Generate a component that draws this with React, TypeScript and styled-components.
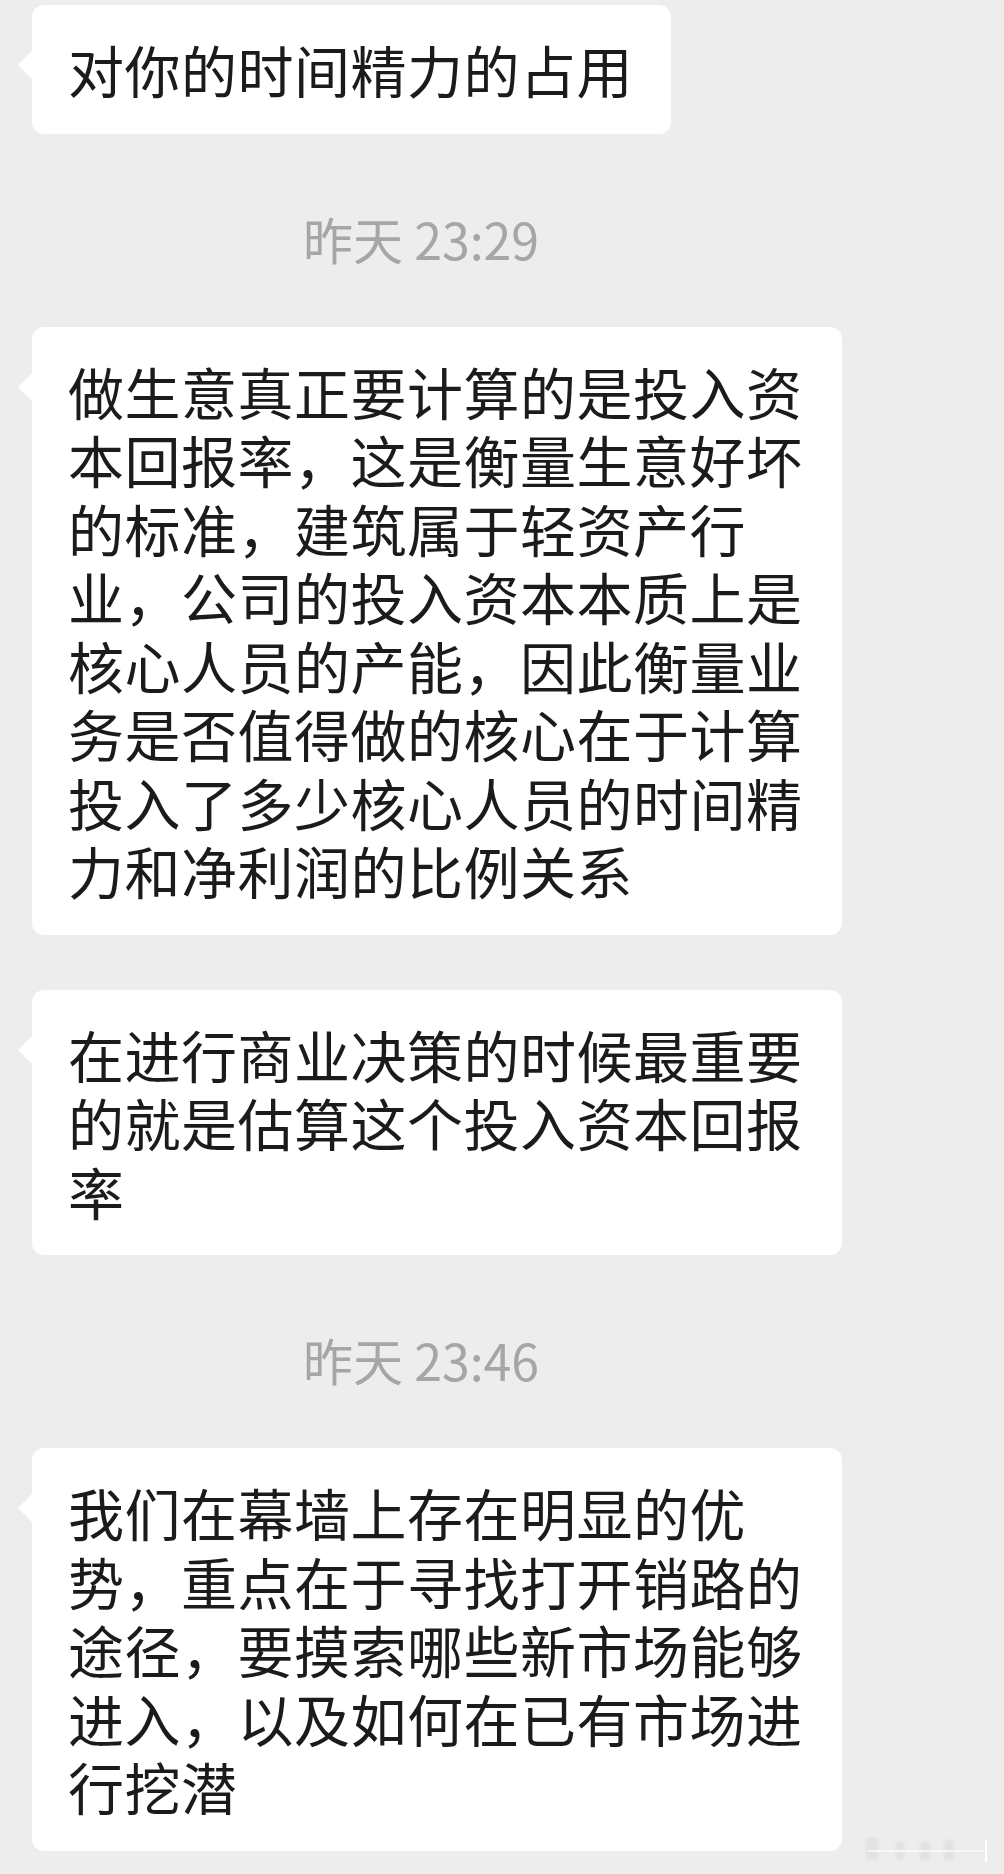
import React from 'react';
import styled, { createGlobalStyle } from 'styled-components';

type Item = { kind: 'time'; text: string } | { kind: 'msg'; text: string };

const items: Item[] = [
	{ kind: 'msg', text: '对你的时间精力的占用' },
	{ kind: 'time', text: '昨天 23:29' },
	{
		kind: 'msg',
		text: '做生意真正要计算的是投入资本回报率，这是衡量生意好坏的标准，建筑属于轻资产行业，公司的投入资本本质上是核心人员的产能，因此衡量业务是否值得做的核心在于计算投入了多少核心人员的时间精力和净利润的比例关系',
	},
	{ kind: 'msg', text: '在进行商业决策的时候最重要的就是估算这个投入资本回报率' },
	{ kind: 'time', text: '昨天 23:46' },
	{
		kind: 'msg',
		text: '我们在幕墙上存在明显的优势，重点在于寻找打开销路的途径，要摸索哪些新市场能够进入，以及如何在已有市场进行挖潜',
	},
];

const GlobalStyle = createGlobalStyle`
	html, body {
		margin: 0;
		padding: 0;
		background: #ededed;
	}
`;

const Page = styled.div`
	position: relative;
	min-height: 1874px;
	width: 1004px;
	box-sizing: border-box;
	padding: 5px 0 0 0;
	background: #ededed;
	font-family: 'Noto Sans CJK SC', 'Noto Sans', sans-serif;
`;

const Thread = styled.div`
	width: 842px;
	box-sizing: border-box;
	padding-left: 32px;
	display: flex;
	flex-direction: column;
	align-items: flex-start;
`;

const Bubble = styled.div<{ $first?: boolean }>`
	position: relative;
	max-width: 810px;
	box-sizing: border-box;
	padding: 30px 38px 30px 36px;
	margin-top: ${(p) => (p.$first ? '0' : '55px')};
	background: #ffffff;
	border-radius: 12px;
	color: #1b1b1b;
	font-size: 56px;
	line-height: 68.5px;
	letter-spacing: 0.5px;
	word-break: break-all;

	&::before {
		content: '';
		position: absolute;
		left: -14px;
		top: 46px;
		border-style: solid;
		border-width: 14px 14px 14px 0;
		border-color: transparent #ffffff transparent transparent;
	}
`;

const Stamp = styled.div`
	align-self: stretch;
	margin: 74px 0 59px -32px;
	text-align: center;
	font-size: 50px;
	line-height: 60px;
	color: #a6a6a6;
`;

const Mark = styled.svg`
	position: absolute;
	right: 8px;
	bottom: 8px;
`;

const App = () => {
	return (
		<>
			<GlobalStyle />
			<Page>
				<Thread>
					{items.map((it, i) => {
						if (it.kind === 'time') return <Stamp key={i}>{it.text}</Stamp>;
						const prev = items[i - 1];
						return (
							<Bubble key={i} $first={!prev || prev.kind === 'time'}>
								{it.text}
							</Bubble>
						);
					})}
				</Thread>
				{/* faint watermark bottom right */}
				<Mark width='140' height='34' viewBox='0 0 140 34'>
					<defs>
						<filter id='soft'>
							<feGaussianBlur stdDeviation='1.6' />
						</filter>
					</defs>
					<g filter='url(#soft)' fill='#e2e2e2'>
						<rect x='10' y='6' width='12' height='22' />
						<rect x='40' y='10' width='8' height='18' />
						<rect x='64' y='10' width='10' height='18' />
						<rect x='88' y='8' width='10' height='20' />
					</g>
					<line x1='12' y1='19' x2='128' y2='19' stroke='#f7f7f7' strokeWidth='2' />
					<line x1='130' y1='8' x2='130' y2='30' stroke='#ffffff' strokeWidth='2' />
				</Mark>
			</Page>
		</>
	);
};

export default App;
